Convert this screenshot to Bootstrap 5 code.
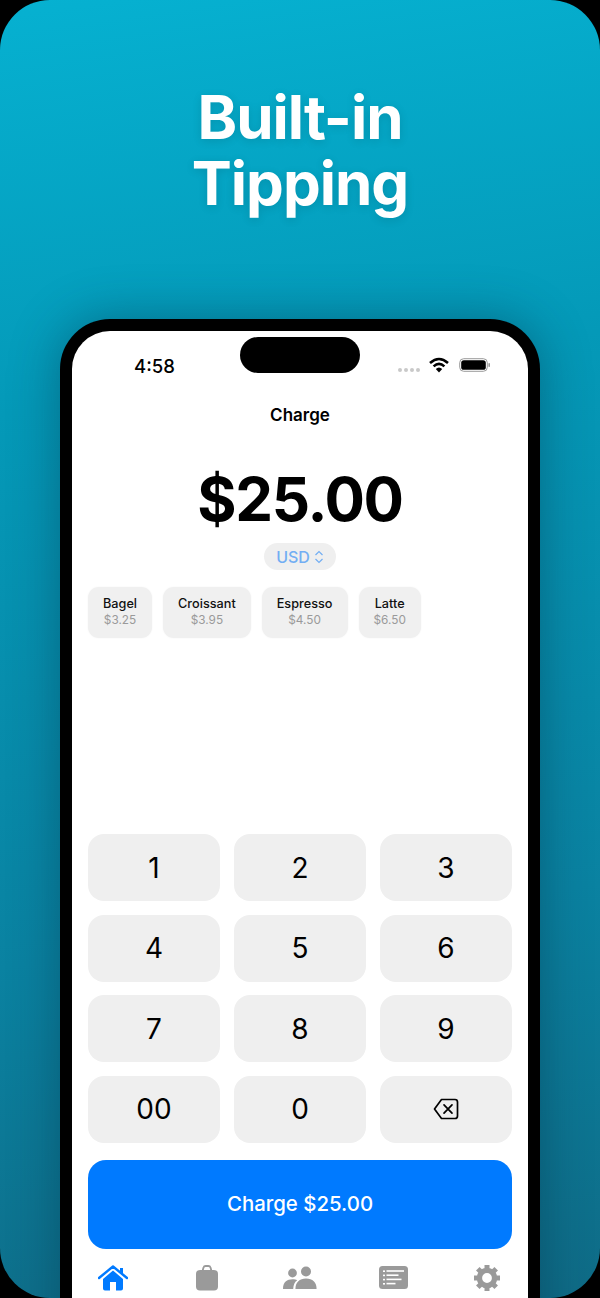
<!DOCTYPE html>
<html lang="en">
<head>
  <meta charset="UTF-8">
  <meta name="viewport" content="width=device-width, initial-scale=1">
  <title>Built-in Tipping</title>

  <link rel="stylesheet" href="https://cdn.jsdelivr.net/npm/bootstrap@5.3.0/dist/css/bootstrap.min.css">

  <style>
    html, body {
      height: 1298px;
      overflow: hidden;
      background: #000;
    }
    body {
      font-family: Inter, "Liberation Sans", sans-serif;
    }
    .promo {
      height: 1298px;
      border-radius: 50px;
      overflow: hidden;
      background: linear-gradient(172deg, #06b1d1 0%, #0499b8 30%, #0a82a1 70%, #0f6b86 100%);
    }
    .promo-title {
      padding-top: 84px;
      height: 319px;
      margin: 0;
      color: #fff;
      font-size: 60px;
      font-weight: 700;
      line-height: 66px;
      letter-spacing: -1px;
      text-align: center;
      text-shadow: 0 2px 10px rgba(0, 0, 0, 0.12);
    }
    .phone {
      width: 480px;
      height: 1100px;
      margin: 0 auto;
      padding: 12px 12px 0;
      background: #000;
      border-radius: 50px 50px 0 0;
      box-shadow: 0 0 50px rgba(0, 40, 60, 0.4);
    }
    .screen {
      position: relative;
      height: 100%;
      background: #fff;
      border-radius: 38px 38px 0 0;
      padding: 0 16px;
    }
    .island {
      position: absolute;
      top: 6px;
      left: 168px;
      width: 120px;
      height: 36px;
      background: #000;
      border-radius: 18px;
    }
    .status {
      height: 59px;
      padding: 21px 37px 0 62px;
      margin: 0 -16px;
    }
    .clock {
      font-size: 18.5px;
      font-weight: 500;
      line-height: 28px;
      color: #000;
    }
    .sig-dots {
      gap: 2px;
      margin: 11px 9px 0 0;
    }
    .sig-dot {
      width: 4px;
      height: 4px;
      border-radius: 50%;
      background: #c9c9c9;
    }
    .status-icons {
      margin-top: 5px;
    }
    .wifi-ico {
      margin-right: 10px;
    }
    .screen-title {
      font-size: 17px;
      font-weight: 600;
      line-height: 24px;
      color: #000;
      text-align: center;
      margin-top: 13px;
    }
    .amount {
      font-size: 60px;
      font-weight: 700;
      line-height: 72px;
      letter-spacing: -1.3px;
      color: #000;
      text-align: center;
      margin-top: 36px;
    }
    .currency {
      width: 72px;
      height: 27px;
      margin: 8px auto 0;
      background: #efefef;
      border-radius: 14px;
      color: #72aef3;
      font-size: 16px;
      font-weight: 500;
    }
    .quick-items {
      margin-top: 17px;
      gap: 11px;
    }
    .quick-item {
      height: 51px;
      background: #f0f0f0;
      border-radius: 11px;
      text-align: center;
      padding: 9px 15px 0;
      box-shadow: 0 0 2px rgba(0, 0, 0, 0.05);
    }
    .quick-name {
      font-size: 12.7px;
      font-weight: 500;
      line-height: 16px;
      color: #111;
    }
    .quick-price {
      font-size: 11.8px;
      line-height: 17px;
      color: #9a9a9a;
    }
    .keypad {
      margin-top: 196px;
      display: grid;
      grid-template-columns: repeat(3, 132px);
      grid-auto-rows: 67px;
      column-gap: 14px;
      row-gap: 13.67px;
    }
    .key {
      background: #efefef;
      border-radius: 16px;
      font-size: 28px;
      line-height: 1;
      color: #000;
    }
    .charge-btn {
      width: 100%;
      height: 89px;
      margin-top: 17px;
      background: #007aff;
      border: 0;
      border-radius: 18px;
      color: #fff;
      font-size: 20.4px;
      font-weight: 500;
    }
    .tabs {
      display: grid;
      grid-template-columns: repeat(5, 60px);
      column-gap: 33.5px;
      justify-items: center;
      align-items: center;
      margin: 16px 0 0 -5px;
    }
    .tab-ico {
      display: block;
    }
  </style>
</head>
<body>
  <div class="promo">
    <h1 class="promo-title">Built-in<br>Tipping</h1>

    <div class="phone">
      <div class="screen">
        <div class="island"></div>

        <!-- Status bar -->
        <div class="status d-flex justify-content-between align-items-start">
          <span class="clock">4:58</span>
          <div class="status-icons d-flex align-items-start">
            <span class="sig-dots d-flex">
              <i class="sig-dot"></i><i class="sig-dot"></i><i class="sig-dot"></i><i class="sig-dot"></i>
            </span>
            <svg class="wifi-ico" width="20" height="16" viewBox="0 0 20 16">
              <path d="M1 6 Q10 -2 19 6" fill="none" stroke="#000" stroke-width="2.6"/>
              <path d="M4.6 9.4 Q10 4.4 15.4 9.4" fill="none" stroke="#000" stroke-width="2.6"/>
              <path d="M6.8 12 Q10 9 13.2 12 L10 15.6 Z" fill="#000"/>
            </svg>
            <svg width="32" height="16" viewBox="0 0 32 16">
              <rect x="0.7" y="1.7" width="27.6" height="12.6" rx="4" fill="none" stroke="#9a9a9a" stroke-width="1"/>
              <rect x="2.2" y="3.2" width="24.6" height="9.6" rx="2.6" fill="#000"/>
              <rect x="29.4" y="6" width="1.6" height="4" rx="0.8" fill="#9a9a9a"/>
            </svg>
          </div>
        </div>

        <div class="screen-title">Charge</div>
        <div class="amount">$25.00</div>

        <div class="currency d-flex align-items-center justify-content-center gap-1">
          USD
          <svg width="10" height="14" viewBox="0 0 10 14" fill="none" stroke="#72aef3" stroke-width="1.2">
            <path d="M1.5 5 L5 1.5 L8.5 5"/>
            <path d="M1.5 9 L5 12.5 L8.5 9"/>
          </svg>
        </div>

        <!-- Quick items -->
        <div class="quick-items d-flex">
          <div class="quick-item"><div class="quick-name">Bagel</div><div class="quick-price">$3.25</div></div>
          <div class="quick-item"><div class="quick-name">Croissant</div><div class="quick-price">$3.95</div></div>
          <div class="quick-item"><div class="quick-name">Espresso</div><div class="quick-price">$4.50</div></div>
          <div class="quick-item"><div class="quick-name">Latte</div><div class="quick-price">$6.50</div></div>
        </div>

        <!-- Keypad -->
        <div class="keypad">
          <div class="key d-flex align-items-center justify-content-center">1</div>
          <div class="key d-flex align-items-center justify-content-center">2</div>
          <div class="key d-flex align-items-center justify-content-center">3</div>
          <div class="key d-flex align-items-center justify-content-center">4</div>
          <div class="key d-flex align-items-center justify-content-center">5</div>
          <div class="key d-flex align-items-center justify-content-center">6</div>
          <div class="key d-flex align-items-center justify-content-center">7</div>
          <div class="key d-flex align-items-center justify-content-center">8</div>
          <div class="key d-flex align-items-center justify-content-center">9</div>
          <div class="key d-flex align-items-center justify-content-center">00</div>
          <div class="key d-flex align-items-center justify-content-center">0</div>
          <div class="key d-flex align-items-center justify-content-center">
            <svg width="26" height="22" viewBox="0 0 26 22" fill="none" stroke="#000" stroke-width="1.7" stroke-linejoin="round" stroke-linecap="round">
              <path d="M8.5 1.5 H22 a2.5 2.5 0 0 1 2.5 2.5 V18 a2.5 2.5 0 0 1 -2.5 2.5 H8.5 L1.5 11 Z"/>
              <path d="M11 6.8 L19 15.2 M19 6.8 L11 15.2"/>
            </svg>
          </div>
        </div>

        <button class="charge-btn d-block" type="button">Charge $25.00</button>

        <!-- Tab bar -->
        <div class="tabs">
          <svg class="tab-ico" width="30" height="26" viewBox="0 0 30 26">
            <path d="M1 13 L15 1.5 L29 13" fill="none" stroke="#007aff" stroke-width="2.4" stroke-linecap="round" stroke-linejoin="round"/>
            <path d="M22 3 h3 v6 l-3 -2.6 Z" fill="#007aff"/>
            <path d="M5 14 L15 5.6 L25 14 V23.5 a2 2 0 0 1 -2 2 H7 a2 2 0 0 1 -2 -2 Z M12 17 V25.5 H18 V17 Z" fill="#007aff" fill-rule="evenodd"/>
          </svg>
          <svg class="tab-ico" width="22" height="26" viewBox="0 0 22 26">
            <path d="M6.5 6 L7.5 2.6 Q8 1 9.6 1 H12.4 Q14 1 14.5 2.6 L15.5 6" fill="none" stroke="#9a9a9a" stroke-width="1.8"/>
            <rect x="0" y="5" width="22" height="20.5" rx="4" fill="#9a9a9a"/>
          </svg>
          <svg class="tab-ico" width="34" height="24" viewBox="0 0 34 24" fill="#9a9a9a">
            <circle cx="9.5" cy="7" r="4.4"/>
            <circle cx="23" cy="5.5" r="5"/>
            <path d="M0 23 C0 16 4 13.2 9.5 13.2 C11.5 13.2 13 13.6 14.2 14.2 C11.6 16 10.4 19 10.2 23 Z"/>
            <path d="M12.4 23 C12.4 16 16.6 12.4 23 12.4 C29.6 12.4 33.6 16 33.6 23 Z"/>
          </svg>
          <svg class="tab-ico" width="29" height="23" viewBox="0 0 29 23">
            <rect width="29" height="23" rx="3.5" fill="#9a9a9a"/>
            <g fill="#fff">
              <rect x="4" y="4.4" width="2" height="1.6"/><rect x="7.5" y="4.2" width="17.5" height="1.6"/>
              <rect x="4" y="8.6" width="2" height="1.6"/><rect x="7.5" y="8.4" width="12" height="1.6"/>
              <rect x="4" y="12.8" width="2" height="1.6"/><rect x="7.5" y="12.6" width="15" height="1.6"/>
              <rect x="4" y="17" width="2" height="1.6"/><rect x="7.5" y="16.8" width="9" height="1.6"/>
            </g>
          </svg>
          <svg class="tab-ico" width="26" height="26" viewBox="0 0 26 26">
            <circle cx="13" cy="13" r="7.6" fill="none" stroke="#9a9a9a" stroke-width="5.4"/>
            <g stroke="#9a9a9a" stroke-width="5" stroke-linecap="butt">
              <path d="M13 0 V4"/><path d="M13 22 V26"/><path d="M0 13 H4"/><path d="M22 13 H26"/>
              <path d="M3.8 3.8 L6.6 6.6"/><path d="M19.4 19.4 L22.2 22.2"/><path d="M3.8 22.2 L6.6 19.4"/><path d="M19.4 6.6 L22.2 3.8"/>
            </g>
          </svg>
        </div>
      </div>
    </div>
  </div>

  <script src="https://cdn.jsdelivr.net/npm/bootstrap@5.3.0/dist/js/bootstrap.bundle.min.js"></script>
</body>
</html>
